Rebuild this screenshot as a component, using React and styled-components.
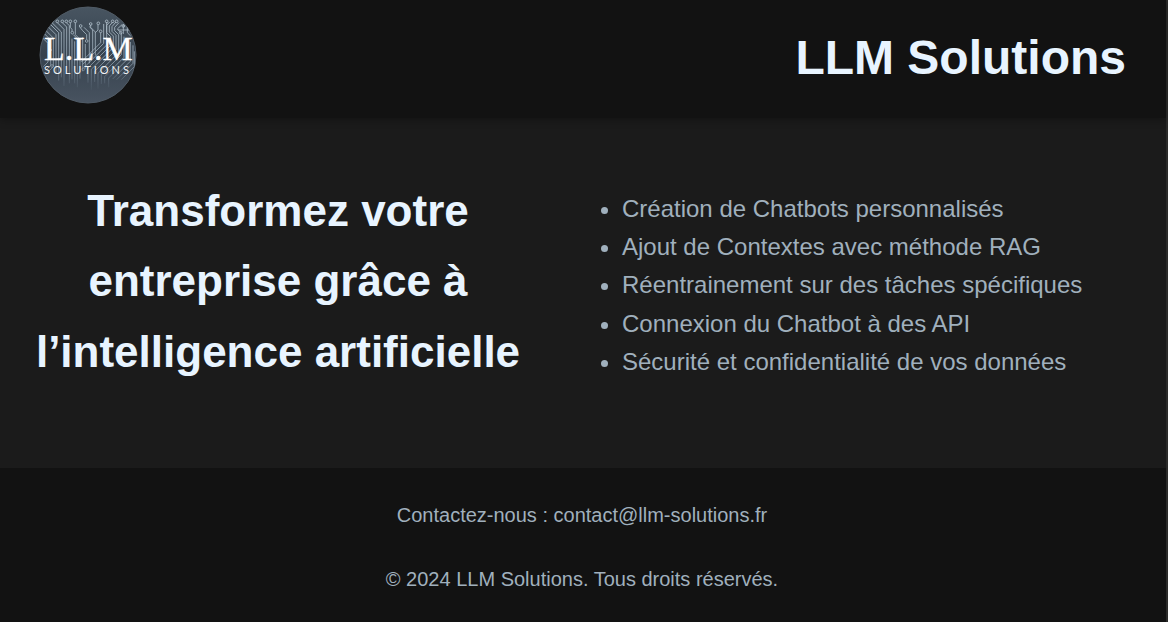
import React from "react";
import styled, { createGlobalStyle } from "styled-components";

const GlobalStyle = createGlobalStyle`
  * { box-sizing: border-box; }
  body {
    margin: 0;
    background: #121212;
    color: #a0b0bd;
    font-family: "Liberation Sans", Arial, sans-serif;
    line-height: 1.6;
  }
`;

const Page = styled.div`
  display: flex;
  flex-direction: column;
  min-height: 100vh;
  border-right: 2px solid #2b2b2a;
`;

const Header = styled.header`
  position: relative;
  display: flex;
  align-items: center;
  justify-content: space-between;
  padding: 6px 40px 7px 39px;
  background: #121212;
  box-shadow: 0 2px 8px rgba(0, 0, 0, 0.3);
`;

const Logo = styled.svg`
  display: block;
  width: 98px;
  height: 98px;
  margin-bottom: 7px;
`;

const Brand = styled.h1`
  margin: 0;
  color: #e8f4ff;
  font-size: 48px;
`;

const Main = styled.main`
  display: grid;
  grid-template-columns: 1fr 1fr;
  align-items: center;
  padding: 58px 22px 73px 20px;
  background: #1b1b1b;
`;

const Headline = styled.h2`
  margin: 0 46px 8px 0;
  color: #e8f4ff;
  font-size: 44px;
  text-align: center;
`;

const Services = styled.ul`
  margin: 0;
  padding-left: 40px;
  font-size: 24px;
`;

const Footer = styled.footer`
  display: flex;
  flex: 1;
  flex-direction: column;
  gap: 32px;
  padding: 31px 22px 24px 20px;
  background: #121212;
  font-size: 20px;
  text-align: center;
`;

const FooterText = styled.p`
  margin: 0;
`;

const services = [
  "Création de Chatbots personnalisés",
  "Ajout de Contextes avec méthode RAG",
  "Réentrainement sur des tâches spécifiques",
  "Connexion du Chatbot à des API",
  "Sécurité et confidentialité de vos données",
];

const traces = [
  "M50 76L78 104V220",
  "M56 68L86 98V242",
  "M66 68L94 96V232",
  "M82 68L102 88V258",
  "M97 68L110 81V220",
  "M109 68L118 77V250",
  "M121 68V82L126 88V94",
  "M136 68V104L150 118V236",
  "M130 104L142 116V262",
  "M44 88L70 114V200L56 214",
  "M40 98L62 120V196L48 210",
  "M36 112L54 130V186L40 200",
  "M134 124V250",
  "M126 116V238",
  "M150 82L158 92L170 104V118",
  "M162 82L178 98V190",
  "M178 80L188 90V176",
  "M158 112V214",
  "M166 132V206",
  "M182 74V82L196 96V166",
  "M204 74V90L196 98",
  "M212 98V128L154 186",
  "M221 72V130L158 193",
  "M230 66V135L162 203",
  "M239 66L230 76V98L242 110V136L174 204V248",
  "M248 66L238 78V96L250 108V142L184 208V270",
  "M258 66L246 80V94L258 106V150L194 214V246",
  "M267 68L254 82V92L266 104V158L204 220V266",
  "M276 74L262 87L274 99V164L214 224V252",
  "M282 110V172L224 230V250",
  "M292 116V178L236 234V262",
  "M301 126V184L248 237",
  "M309 136V190L260 239",
  "M313 154V200L274 239",
  "M264 90H304M280 72V102M292 80V98L302 108",
];

const nodes = [
  [66, 64], [82, 64], [97, 64], [109, 64], [121, 64], [136, 64],
  [127, 98], [170, 123], [152, 78], [182, 72], [205, 70], [212, 94],
  [230, 64], [248, 64], [260, 64], [280, 78], [272, 98], [60, 150],
  [66, 198], [160, 208],
];

function CompanyLogo() {
  return (
    <Logo viewBox="0 0 98 98" role="img" aria-label="Logo LLM Solutions">
      <defs>
        <linearGradient id="disc" x1="0" y1="0" x2="0" y2="1">
          <stop offset="0" stopColor="#485561" />
          <stop offset="0.5" stopColor="#36424e" />
          <stop offset="1" stopColor="#485360" />
        </linearGradient>
        <linearGradient id="wire" gradientUnits="userSpaceOnUse" x1="0" y1="60" x2="0" y2="270">
          <stop offset="0" stopColor="#b4c3ce" stopOpacity="0.8" />
          <stop offset="0.6" stopColor="#a3b4c2" stopOpacity="0.7" />
          <stop offset="1" stopColor="#8498aa" stopOpacity="0.05" />
        </linearGradient>
        <clipPath id="round">
          <circle cx="49" cy="49" r="48" />
        </clipPath>
      </defs>
      <circle cx="49" cy="49" r="48" fill="url(#disc)" stroke="#505b66" />
      <g clipPath="url(#round)">
        <g transform="translate(-9 -6) scale(0.3333)" fill="none" stroke="url(#wire)" strokeWidth="3">
          {traces.map((d) => (
            <path key={d} d={d} />
          ))}
          {nodes.map(([cx, cy]) => (
            <circle key={`${cx}-${cy}`} cx={cx} cy={cy} r="4" />
          ))}
        </g>
      </g>
      <text
        x="5"
        y="54"
        fill="#fff"
        stroke="#fff"
        strokeWidth="0.3"
        fontFamily="Liberation Serif, serif"
        fontSize="34"
      >
        L.L.M
      </text>
      <text
        x="5"
        y="68"
        fill="#f0f3f5"
        fontFamily="Lato, sans-serif"
        fontSize="11"
        letterSpacing="3"
      >
        SOLUTIONS
      </text>
    </Logo>
  );
}

export default function App() {
  return (
    <>
      <GlobalStyle />
      <Page>
        <Header>
          <CompanyLogo />
          <Brand>LLM Solutions</Brand>
        </Header>
        <Main>
          <Headline>Transformez votre entreprise grâce à l’intelligence artificielle</Headline>
          <Services>
            {services.map((service) => (
              <li key={service}>{service}</li>
            ))}
          </Services>
        </Main>
        <Footer>
          <FooterText>Contactez-nous : contact@llm-solutions.fr</FooterText>
          <FooterText>© 2024 LLM Solutions. Tous droits réservés.</FooterText>
        </Footer>
      </Page>
    </>
  );
}
